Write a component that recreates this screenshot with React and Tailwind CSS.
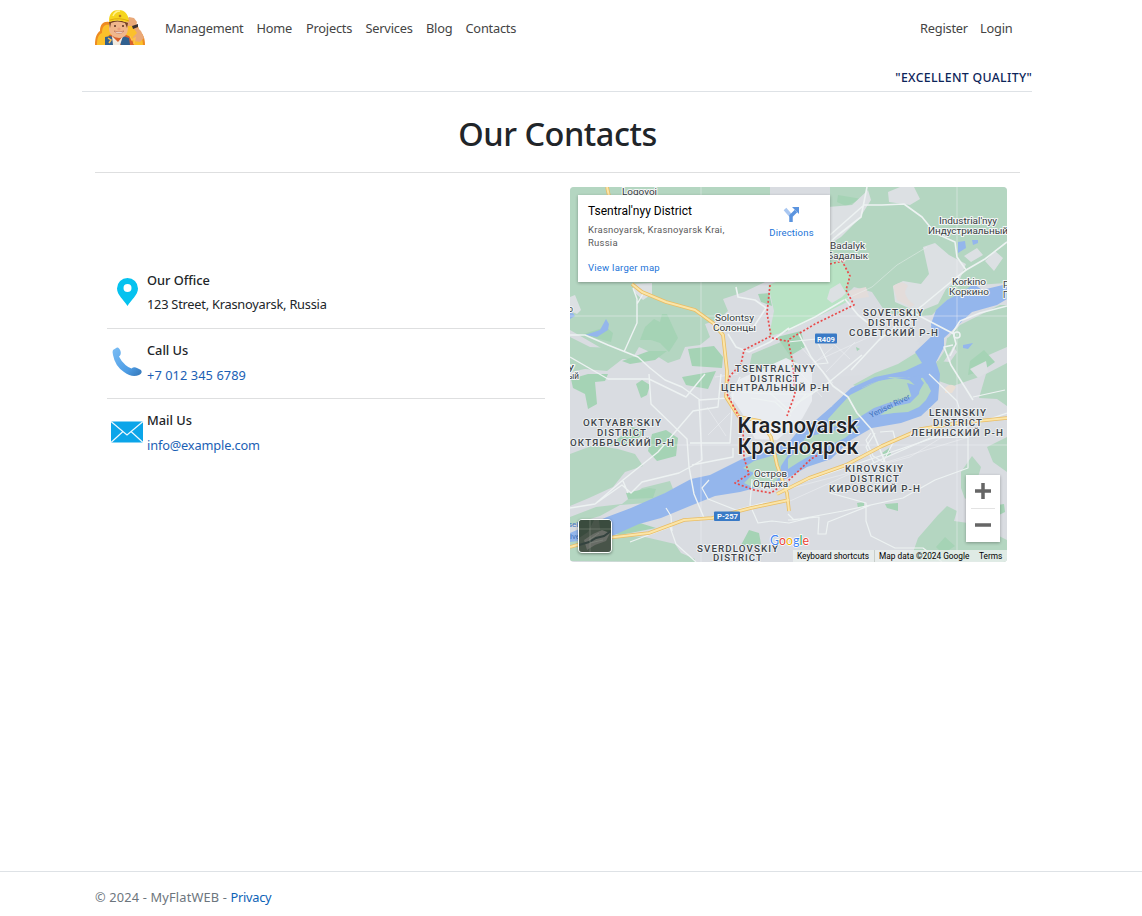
import React from "react";

const navItems = [
  ["Management", "w-[78px]"],
  ["Home", "w-9"],
  ["Projects", "w-[46px]"],
  ["Services", "w-[47px]"],
  ["Blog", "w-[26px]"],
  ["Contacts", "w-[52px]"],
];

function Logo() {
  return (
    <svg className="mb-[3px] h-9 w-[50px]" viewBox="0 0 50 36">
      <path d="M0 36C0 28 2 24 5 22C5 15 9 12 14 13L34 13C40 13 44 16 44 22C48 24 50 29 50 36Z" fill="#ee8b22" />
      <path d="M2 36C2 28 4 25 7 24C7 17 10 15 15 16L38 17C42 19 42 22 43 24C46 26 48 31 48 36Z" fill="#fbc02b" />
      <path d="M31 11L34 8L39 9L42 13L41 17L46 22L49 29L45 33L39 32L38 28L42 24L37 17L33 17Z" fill="#e9a878" />
      <path d="M37 17L43 15L43 18L38 20Z" fill="#3a3032" />
      <path d="M10 36L14 26L20 25L29 25L36 28L39 36Z" fill="#d8602e" />
      <path d="M10 28L16 27L21 34L20 36H10ZM28 27L34 29L35 36H26L25 34Z" fill="#31608f" />
      <path d="M17 27L23 33L28 27L25 36H18Z" fill="#f1eadf" />
      <path d="M13 29L16 31L14 34M35 27L37 31L40 29L39 35" fill="none" stroke="#ffc14c" strokeWidth="1.5" />
      <path d="M14 12H32L33 20Q32 29 24 29Q15 28 14 21Z" fill="#f0b68c" />
      <path d="M14 13Q23 9 33 14L32 19L30 14Q22 11 16 14L15 19Z" fill="#714025" />
      <path d="M14 12C14 4 18 1 24 1C30 1 33 5 34 12L31 13Q22 10 14 13Z" fill="#f6d51e" />
      <path d="M15 11Q24 8 34 12" stroke="#dea812" fill="none" />
      <path d="M18 7Q20 2 25 2" stroke="#fff391" strokeWidth="1.5" fill="none" />
      <circle cx="25" cy="7" r="1.3" fill="#b87925" />
      <path d="M19 17h2m6 0h2" stroke="#56311f" strokeWidth="1.5" />
      <circle cx="24" cy="20" r="1.6" fill="#e9a07c" />
      <path d="M19 22Q24 27 29 22Q24 24 19 22" fill="#fff" stroke="#b8664c" strokeWidth=".6" />
    </svg>
  );
}

// x, baseline, width, text
const districtLabels = [
  [293, 129, 61, "SOVETSKIY"],
  [298, 139, 50, "DISTRICT"],
  [279, 148.5, 90, "СОВЕТСКИЙ Р-Н"],
  [165, 185, 81, "TSENTRAL'NYY"],
  [180, 194.5, 50, "DISTRICT"],
  [151, 204, 109, "ЦЕНТРАЛЬНЫЙ Р-Н"],
  [13, 239, 79, "OKTYABR'SKIY"],
  [27, 249, 50, "DISTRICT"],
  [0, 258.5, 105, "ОКТЯБРЬСКИЙ Р-Н"],
  [359, 229, 58, "LENINSKIY"],
  [363, 239, 50, "DISTRICT"],
  [341, 249, 93, "ЛЕНИНСКИЙ Р-Н"],
  [275, 285, 59, "KIROVSKIY"],
  [280, 295, 50, "DISTRICT"],
  [259, 305, 92, "КИРОВСКИЙ Р-Н"],
  [127, 364.5, 82, "SVERDLOVSKIY"],
  [143, 374, 50, "DISTRICT"],
];

const townLabels = [
  [52, 8, 35, "Logovoi"],
  [260, 62, 35, "Badalyk"],
  [257, 72, 41, "Бадалык"],
  [369, 37, 58, "Industrial'nyy"],
  [358, 47, 80, "Индустриальный"],
  [382, 98, 34, "Korkino"],
  [379, 108, 40, "Коркино"],
  [145, 134, 39, "Solontsy"],
  [143, 144, 43, "Солонцы"],
  [184, 290, 33, "Остров"],
  [183, 300, 35, "Отдыха"],
  [433, 101, 6, "P"],
  [433, 111, 6, "П"],
  [-2, 183, 6, "у"],
  [-2, 192, 11, "ый"],
  [-2, 125, 5, "o"],
];

function Label({ x, y, w, children, ...rest }) {
  return <text x={x} y={y} textLength={w} lengthAdjust="spacingAndGlyphs" {...rest}>{children}</text>;
}

function MapDrawing() {
  return (
    <svg className="block h-[375px] w-[437px]" viewBox="0 0 437 375" fontFamily="Roboto, sans-serif">
      <rect width="437" height="375" fill="#d9dce1" />
      <g fill="#b4d6c1">
        <path d="M0 0H200V8H260V95H195L174 105L153 112L158 124L148 133L135 137L140 150L130 158L115 160L110 172L98 176L82 166L69 160L62 172L50 172L0 143Z" />
        <path d="M260 0H437V96L405 98L376 114L362 128L345 130L316 126L302 105L284 100L276 108L258 112L230 120L260 88Z" />
        <path d="M430 118L390 138L378 151L387 165L380 175L367 174L360 191L383 199L409 190L405 174L437 160V118Z" />
        <path d="M0 150L20 160L42 161L55 170L37 184L15 182L0 185Z" />
        <path d="M0 267L24 258L48 262L65 267L73 279L55 285L43 300L19 311L0 319Z" />
        <path d="M0 330L26 320L52 317L72 301L100 294L103 302L77 316L50 318L30 329L0 338Z" />
        <path d="M0 374V348L25 347L75 350L105 357L111 366L125 372V375Z" />
        <path d="M340 374L348 351L368 328L377 319L387 324L384 334L405 337L437 353V375Z" />
        <path d="M391 285L402 269L411 280L404 304L395 312L391 301ZM417 260L437 250V285L423 275Z" />
        <path d="M416 187L437 176V219L427 212L409 211Z" />
        <path d="M182 167L211 155L227 177L214 186L190 189L179 181Z" />
      </g>
      <path d="M198 98L260 75L271 74L281 89L276 104L279 114L243 132L216 145L199 149L204 124Z" fill="#b9e3c5" />
      <path d="M279 117L245 136L219 152L233 165L262 190L300 188L330 176L350 160L340 132L305 128Z" fill="#dadde2" />
      <g fill="#a5d3b5">
        <path d="M75 140L84 132L90 135L92 127L97 127L108 151L99 165L90 156L81 153L70 153ZM118 162L144 159L153 170L152 181L122 179ZM52 174L79 164L97 164L85 173L60 177ZM10 148L36 140L43 146L41 155L25 151Z" />
        <path d="M1 192L18 187H38L35 194L25 195L27 217L18 222L15 207L3 201ZM66 197L72 193L80 198L77 208L71 211ZM112 190L146 184L138 202L116 198ZM82 247L96 243L108 251L106 269L87 274L78 264ZM39 259L62 240L76 243L63 257ZM56 306L79 301L86 302L83 311L58 312Z" />
        <path d="M12 342L70 336L86 341L50 348ZM170 360L179 343L189 346L191 357L181 360ZM287 316L294 315L294 320L288 321ZM315 317L328 316L328 324L317 321ZM421 319L434 317L435 325L427 329ZM312 266L319 261L321 267L316 270ZM366 360L375 350L385 359L373 367Z" />
        <path d="M268 8L292 12L276 19L267 15ZM207 150L231 144L235 160L220 169ZM188 107L199 106L202 119L191 115ZM286 160L290 162L287 164Z" />
        <path d="M400 174L414 163L425 175L412 184L398 188Z" />
      </g>
      <g fill="#dce0e3">
        <path d="M62 97L82 96V107L73 113L65 106ZM318 5L330 0H344L350 12L340 18L319 15Z" />
        <path d="M258 20L282 18L298 3L301 13L289 32L271 50L260 57ZM353 60L365 56L379 68L396 77L390 92L376 102L368 117L348 125L325 115L323 99L333 94L351 97L359 87ZM394 69L407 61L413 68L401 75ZM415 74L425 64L433 71L424 84ZM400 182L416 174L418 185L408 191Z" />
        <path d="M0 110L5 108L11 123L7 127L0 124ZM257 112L260 102L270 96L276 106L272 110L262 116Z" />
      </g>
      <path d="M323 99Q333 92 338 99Q330 108 345 118L340 120L327 113ZM278 104L296 100L299 110L284 112Z" fill="#e3dcda" />
      <path d="M375 201Q380 195 386 200L382 206H375Z" fill="#eadfd5" />
      <path d="M170 192L216 171L242 183L242 214L232 232L207 253L185 252L172 226L160 208Z" fill="#e9ecf0" />
      <g fill="#94b6ec">
        <path d="M437 97L412 103L404 97L392 105L377 113L366 123L361 137L363 148L349 165L330 177L314 188L286 198L270 214L261 220L246 233L228 244L220 254L197 264L172 272L140 288L121 292L95 306L61 321L37 330L0 346V355L40 350L69 337L91 331L120 319L145 309L170 305L201 297L218 291L237 280L261 272L281 253L302 241L331 236L351 229L368 213L370 187L366 175L374 160L374 151L386 140L402 125L427 118L437 112Z" />
        <path d="M15 148L30 143L36 132L39 137L38 143L27 150ZM388 55L395 54L396 61L388 66ZM402 53H408V56L403 58ZM393 158L403 156L398 162L393 161ZM0 122L5 129L0 132ZM377 223L383 221L382 226L378 225Z" />
      </g>
      <g fill="#b4d8c1">
        <path d="M267 222L280 208L292 202L308 194L325 191L339 193L347 200L342 209L333 213L318 216L304 221L288 231L272 237L260 241L258 232Z" />
        <path d="M351 191L358 190L358 198L361 204L356 213L349 220L338 225L324 226L310 228L322 220L340 216L349 207Z" />
        <path d="M236 250L258 245L280 240L290 239L275 251L258 259L243 267L229 275L218 282L218 272L228 262Z" />
        <path d="M173 281L184 274L201 269L213 267L218 268L211 279L209 290L202 300L184 301L174 296L184 286Z" />
        <path d="M377 151L388 147L381 164L372 177L368 174L375 163Z" />
        <path d="M283 198L305 186L328 177L349 164L356 170L352 185L338 191L315 191L292 201Z" />
      </g>
      <path d="M345 165L363 148L361 139L371 140L374 151L372 161L364 174L368 187L367 203L357 197L351 188L337 191L320 190L300 197L279 207L268 218L262 219L281 201L305 190L335 184L352 176Z" fill="#94b6ec" />
      <path d="M337 196L345 198L350 191L354 196L347 208L342 211Z" fill="#94b6ec" />
      <g fill="none" stroke="#edf2f2" strokeWidth="1.6" strokeLinejoin="round">
        <path d="M0 148L15 148L38 158L53 164L68 170L80 181L95 193L112 200L130 213L158 211M54 165L67 136L67 112L63 101M67 117L73 107M135 187L116 210L79 192H38L0 170M79 187L81 217L117 252L119 280L124 307L134 331M0 321L25 317L53 293L88 265L123 224L148 220L151 187M25 317L52 298L61 306L72 295L109 286L122 279L132 273L129 212M53 294L58 306M120 256H160L163 205L170 190M163 261V270L122 278" strokeWidth="1.400" />
        <path d="M274 113L302 100L327 78L357 60" strokeWidth="1" opacity=".45" />
        <path d="M218 143L245 130L274 113M260 48L294 18H312L334 17L352 30L365 46L385 55L387 70L396 83L382 94L353 118L309 153L281 183M297 0L291 30L268 48L260 55M275 112L288 128L302 139M340 124L384 147M383 158L374 160L381 178L403 213M229 147L241 170L253 185L263 199L278 210L287 226L302 243L315 275M218 222L258 196L292 168M181 144L196 121L185 113L168 110L166 100M158 147L166 160L179 165L200 155L219 141" />
        <path d="M396 83L415 72L437 55M437 119L410 126L390 134L383 145L386 157L380 169" />
        <circle cx="387" cy="148" r="3" />
        <path d="M218 155L246 152L258 176L228 179L208 187L200 206L221 225L236 207M170 205L201 207H243M181 211L205 215L221 229M305 246L296 260L304 276M301 246L296 253L303 269L313 275L325 252L323 244L310 245M301 277L360 251L398 250L398 281L365 293L333 311L273 324L224 333L218 327M398 250L387 214L359 187M260 306L296 316V334L301 349L325 361L353 361L372 375M218 333L249 330L248 347L256 347L258 335L301 318M60 355L100 340L106 357L126 375M102 344L101 329L96 321M182 292L180 318L188 336L202 334L219 336L239 331" strokeWidth="1.200" />
        <path d="M139 293L132 301L138 312L166 323L193 316L218 315M403 210L435 203M218 300L437 226" strokeWidth="1.200" />
      </g>
      <g fill="none" stroke="#f2f5f6" strokeWidth=".7" opacity=".65">
        <path d="M0 129H437M131 0V375M387 0V375M0 258H437M218 302L340 270L377 247M220 314L284 285L402 249M232 187L263 160M242 176L310 145M231 160L263 196M250 144L280 172M256 185L285 155M224 179L252 210M137 220L156 249M138 248L160 226M145 190L168 187M195 192H235M190 202H238M199 214H229" />
      </g>
      <g fill="none" strokeLinejoin="round">
        <path d="M37 0L39 9M62 97L72 105L96 115L125 123L143 136L153 148L157 184L156 210L169 230L190 234L201 250L207 278L217 306L219 324M0 360L28 352L79 346L114 333L142 331L181 321L219 313M207 307L239 291L276 278L312 259L351 242L388 236L437 231" stroke="#e9bd65" strokeWidth="3.600" />
        <path d="M37 0L39 9M62 97L72 105L96 115L125 123L143 136L153 148L157 184L156 210L169 230L190 234L201 250L207 278L217 306L219 324M0 360L28 352L79 346L114 333L142 331L181 321L219 313M207 307L239 291L276 278L312 259L351 242L388 236L437 231" stroke="#fbe5a8" strokeWidth="2" />
        <path d="M200 98L197 126L201 149L174 163L171 177L160 189L155 203L168 228L173 242L174 271L179 287L165 296L184 303L201 306L218 294L241 272L253 265M260 77L272 74L280 89L276 103L284 118L245 137L218 153L223 177L225 207L217 229M202 151L216 154" stroke="#e94a4a" strokeWidth="1.7" strokeDasharray="2 2" />
      </g>
      <g fill="#397ac6">
        <rect x="245" y="146.500" width="22" height="10" rx="1" />
        <rect x="144" y="324.500" width="26" height="9.500" rx="1" />
      </g>
      <g fill="#fff" fontSize="8" fontWeight="600">
        <Label x="247" y="154.500" w="18">R409</Label>
        <Label x="147" y="332" w="21">P-257</Label>
      </g>
      <g fontSize="9" fill="#363b40" stroke="#f3f6f6" strokeWidth="2" paintOrder="stroke" strokeLinejoin="round">
        {townLabels.map(([x, y, w, t]) => <Label key={t + y} x={x} y={y} w={w}>{t}</Label>)}
      </g>
      <g fontSize="9" fill="#40454b" stroke="#eef1f2" strokeWidth="1.800" paintOrder="stroke" strokeLinejoin="round" letterSpacing="1" fontWeight="500">
        {districtLabels.map(([x, y, w, t]) => <Label key={t + y} x={x} y={y} w={w}>{t}</Label>)}
      </g>
      <g fontSize="21.500" fontWeight="500" fill="#1f2327" stroke="#f3f5f6" strokeWidth="2" paintOrder="stroke" strokeLinejoin="round">
        <Label x="167.500" y="245.500" w="121">Krasnoyarsk</Label>
        <Label x="167.500" y="267" w="121">Красноярск</Label>
      </g>
      <g fill="#4173bd" fontSize="8">
        <Label x="301" y="231" w="44" transform="rotate(-26 301 231)">Yenisei River</Label>
        <text x="-4" y="340">isei</text><text x="-5" y="352">River</text>
      </g>
      <g fontSize="14" stroke="#fff" strokeWidth="1.500" paintOrder="stroke" fontFamily="Lato, sans-serif">
        <text x="200" y="358" textLength="39" lengthAdjust="spacingAndGlyphs">
          <tspan fill="#4285f4">G</tspan><tspan fill="#ea4335">o</tspan><tspan fill="#f4b400">o</tspan><tspan fill="#4285f4">g</tspan><tspan fill="#34a853">l</tspan><tspan fill="#ea4335">e</tspan>
        </text>
      </g>
    </svg>
  );
}

function MapPanel() {
  return (
    <div className="relative h-[375px] w-[437px] shrink-0 overflow-hidden rounded font-['Roboto',sans-serif]">
      <MapDrawing />
      <div className="absolute left-2 top-2 flex h-[87px] w-[252px] justify-between bg-white px-[10px] pt-[9px] shadow-[0_1px_3px_rgba(0,0,0,0.3)]">
        <div className="whitespace-nowrap">
          <div className="text-xs leading-[14px] text-black">Tsentral'nyy District</div>
          <div className="mt-[5px] text-[9.500px] leading-[13px] tracking-[0.240px] text-[#5b5b5b]">Krasnoyarsk, Krasnoyarsk Krai,<br />Russia</div>
          <a href="#map" className="mt-3 block text-[9.500px] leading-[13px] tracking-[0.240px] text-[#1a73d8]">View larger map</a>
        </div>
        <div className="mr-[6px] flex w-[45px] flex-col items-center text-[9.500px] tracking-[0.180px] text-[#1a73d8]">
          <svg className="mt-[2px] h-[17px] w-[17px]" viewBox="0 0 17 17">
            <path d="M8 10L2 3" stroke="#a9c7f1" strokeWidth="3.500" fill="none" />
            <path d="M8 16V10L13 5" stroke="#5b94df" strokeWidth="3.500" fill="none" />
            <path d="M9 1H16V8Z" fill="#5b94df" />
          </svg>
          <span className="mt-[3px] leading-[13px]">Directions</span>
        </div>
      </div>
      <div className="absolute left-2 top-[332px] h-[34px] w-[34px] overflow-hidden rounded-sm border border-white shadow-[0_1px_3px_rgba(0,0,0,0.4)]">
        <svg className="h-8 w-8" viewBox="0 0 32 32">
          <rect width="32" height="32" fill="#485449" />
          <path d="M0 0H15L9 12L0 18ZM20 0H32V13L22 16Z" fill="#3a4b3e" />
          <path d="M5 20L14 14L23 10L31 13L27 21L16 25L8 30Z" fill="#686c66" />
          <path d="M0 25L10 22L17 18L25 16L32 11" stroke="#34433f" strokeWidth="2" fill="none" />
          <path d="M11 0V32M0 9H32M10 20L20 13M11 23L24 20" stroke="#899087" strokeWidth=".5" fill="none" />
        </svg>
      </div>
      <div className="absolute left-[396px] top-[288px] flex h-[67px] w-[34px] flex-col items-center bg-white shadow-[0_1px_3px_rgba(0,0,0,0.3)]">
        <svg className="h-[67px] w-[34px]" viewBox="0 0 34 67">
          <path d="M9 16H25M17 8V24M9 50H25" stroke="#666" strokeWidth="3.500" />
          <path d="M5 33.500H29" stroke="#e3e3e3" />
        </svg>
      </div>
      <div className="absolute bottom-0 right-0 flex h-3 w-[214px] items-center whitespace-nowrap bg-[#eaf0ed]/80 pl-1 text-[8.300px] leading-3 text-black">
        <span className="w-[78px] border-r border-[#c8cfcb]">Keyboard shortcuts</span>
        <span className="w-[104px] pl-1">Map data ©2024 Google</span>
        <span>Terms</span>
      </div>
    </div>
  );
}

const PinIcon = () => (
  <svg className="mb-1 h-10 w-10" viewBox="0 0 40 40"><path fillRule="evenodd" d="M20.500 34C17 28 10 23 10 16.500A10.500 10.500 0 0 1 31 16.500C31 23 24 28 20.500 34ZM20.500 12a4 4 0 1 0 0 8a4 4 0 1 0 0-8Z" fill="#05c2ef" /></svg>
);

const PhoneIcon = () => (
  <svg className="mb-1 h-10 w-10" viewBox="0 0 40 40">
    <defs><linearGradient id="phone" x2="1" y2="1"><stop stopColor="#7bbdf4" /><stop offset=".65" stopColor="#4e9de5" /><stop offset="1" stopColor="#3475b6" /></linearGradient></defs>
    <path d="M6 8L10 5.500Q12 5 13.500 9Q14.500 12.500 12 14.500Q14 19 18.500 23Q22 26 24.500 26.500Q27 24.500 30 26L34 28Q36 31 32 33Q25 36 17 30Q8 24 6 13Q5 10 6 8Z" fill="url(#phone)" />
  </svg>
);

const MailIcon = () => (
  <svg className="mb-1 h-10 w-10" viewBox="0 0 40 40">
    <rect x="4" y="9.500" width="32" height="21" fill="#0ba5e9" />
    <path d="M4 9.500L20 23L36 9.500M4 30.500L16 19.500M36 30.500L24 19.500" fill="none" stroke="#edf9ff" strokeWidth="1.200" />
  </svg>
);

function ContactRow({ icon, title, children, last }) {
  return (
    <div className={last ? "flex h-[70px]" : "flex h-[70px] border-b border-[#dedfe0]"}>
      <div className="flex w-10 items-center">{icon}</div>
      <div className="whitespace-nowrap pt-[9px] leading-6">
        <div className="h-[25px] font-medium tracking-[-0.020px]">{title}</div>
        {children}
      </div>
    </div>
  );
}

export default function App() {
  return (
    <div className="flex h-[916px] w-[1142px] flex-col bg-white font-['Noto_Sans','Open_Sans',sans-serif] text-[12.800px] text-[#212529]">
      <header className="ml-[82px] flex h-[92px] w-[950px] flex-col border-b border-[#dee2e6]">
        <nav className="flex h-[57px] items-center whitespace-nowrap pl-[13px] pr-5 tracking-[-0.220px] text-[#444]">
          <Logo />
          <div className="ml-5 flex gap-[13.500px]">
            {navItems.map(([name, width]) => <a key={name} href="#nav" className={width}>{name}</a>)}
          </div>
          <div className="ml-auto flex gap-[13px]">
            <a href="#register" className="w-[47px]">Register</a>
            <a href="#login" className="w-[32px]">Login</a>
          </div>
        </nav>
        <div className="mt-[11px] self-end whitespace-nowrap text-[12.300px] font-medium leading-5 tracking-[0.320px] text-[#0c2459]">"EXCELLENT QUALITY"</div>
      </header>
      <main className="ml-[95px] w-[925px] flex-1">
        <h1 className="flex h-[81px] items-center justify-center border-b border-[#dedfe0] pt-1 text-[32.500px] font-medium tracking-[-0.480px]">Our Contacts</h1>
        <div className="flex justify-between pl-3 pr-[13px] pt-[14px]">
          <section className="mt-[72px] w-[438px]">
            <ContactRow icon={<PinIcon />} title="Our Office"><div className="-mt-px tracking-[-0.230px]">123 Street, Krasnoyarsk, Russia</div></ContactRow>
            <ContactRow icon={<PhoneIcon />} title="Call Us"><a href="tel:+70123456789" className="tracking-[0.080px] text-[#1b5fb5]">+7 012 345 6789</a></ContactRow>
            <ContactRow icon={<MailIcon />} title="Mail Us" last><a href="mailto:info@example.com" className="tracking-[-0.160px] text-[#1b5fb5]">info@example.com</a></ContactRow>
          </section>
          <MapPanel />
        </div>
      </main>
      <footer className="flex h-[45px] items-center border-t border-[#dee2e6] pl-[95px] pt-[7px] text-[#6c757d]">
        <span className="tracking-[0.170px]">© 2024 - MyFlatWEB - <a href="#privacy" className="tracking-[-0.280px] text-[#0c62b6]">Privacy</a></span>
      </footer>
    </div>
  );
}
